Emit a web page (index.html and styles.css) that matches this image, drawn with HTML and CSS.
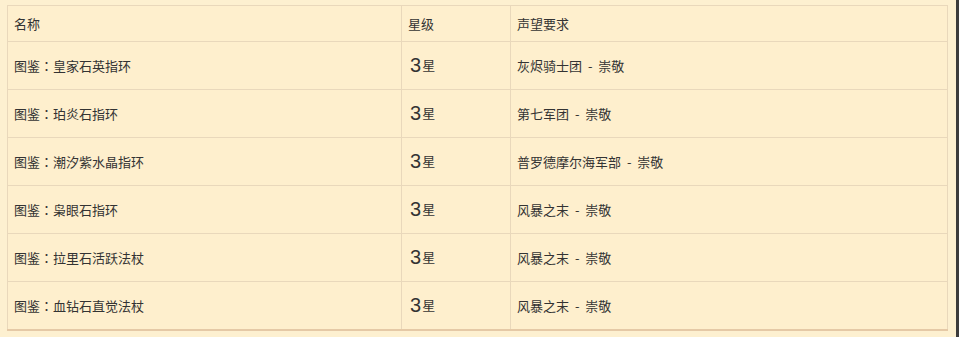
FILE: index.html
```html
<!DOCTYPE html>
<html lang="zh-CN">
<head>
<meta charset="utf-8">
<link rel="stylesheet" href="styles.css">
</head>
<body>
<div class="page">
  <div class="content">
    <table class="tbl">
      <colgroup><col class="c1"><col class="c2"><col class="c3"></colgroup>
      <thead>
        <tr><th>名称</th><th>星级</th><th>声望要求</th></tr>
      </thead>
      <tbody>
        <tr><td>图鉴<span class="colon" lang="ja">：</span>皇家石英指环</td><td><span class="num">3</span>星</td><td class="rep">灰烬骑士团 - 崇敬</td></tr>
        <tr><td>图鉴<span class="colon" lang="ja">：</span>珀炎石指环</td><td><span class="num">3</span>星</td><td class="rep">第七军团 - 崇敬</td></tr>
        <tr><td>图鉴<span class="colon" lang="ja">：</span>潮汐紫水晶指环</td><td><span class="num">3</span>星</td><td class="rep">普罗德摩尔海军部 - 崇敬</td></tr>
        <tr><td>图鉴<span class="colon" lang="ja">：</span>枭眼石指环</td><td><span class="num">3</span>星</td><td class="rep">风暴之末 - 崇敬</td></tr>
        <tr><td>图鉴<span class="colon" lang="ja">：</span>拉里石活跃法杖</td><td><span class="num">3</span>星</td><td class="rep">风暴之末 - 崇敬</td></tr>
        <tr><td>图鉴<span class="colon" lang="ja">：</span>血钻石直觉法杖</td><td><span class="num">3</span>星</td><td class="rep">风暴之末 - 崇敬</td></tr>
      </tbody>
    </table>
  </div>
  <div class="bar"></div>
</div>
</body>
</html>
```
FILE: styles.css
```css
html, body {
  margin: 0;
  padding: 0;
  background: #fdf0d0;
}
.page {
  display: flex;
  height: 337px;
  font-family: "Noto Sans CJK SC", "Noto Sans", sans-serif;
  color: #333;
}
.content {
  flex: 1;
  padding: 5px 0 0 7px;
}
.bar {
  width: 3px;
  background: #3c3c3c;
}
.tbl {
  border-collapse: collapse;
  width: 941px;
  table-layout: fixed;
  background: #feefcd;
  border-bottom: 2px solid #e5c9a6;
}
.c1 { width: 394px; }
.c2 { width: 109px; }
.c3 { width: auto; }
.tbl th, .tbl td {
  border: 1px solid #e9d8bb;
  text-align: left;
  font-weight: normal;
  font-size: 13px;
  padding: 0 6px;
  white-space: nowrap;
}
.tbl tr:last-child td { border-bottom: none; }
.tbl th { height: 35px; }
.tbl td { height: 47px; }
.tbl td:nth-child(2) { padding-left: 8px; }
.colon {
  font-family: "Noto Sans CJK JP", "Noto Sans CJK SC", sans-serif;
}
.rep { word-spacing: 3px; }
.num {
  font-family: "Liberation Sans", "DejaVu Sans", sans-serif;
  font-size: 20px;
  vertical-align: -2px;
  margin-right: 1px;
}
```
